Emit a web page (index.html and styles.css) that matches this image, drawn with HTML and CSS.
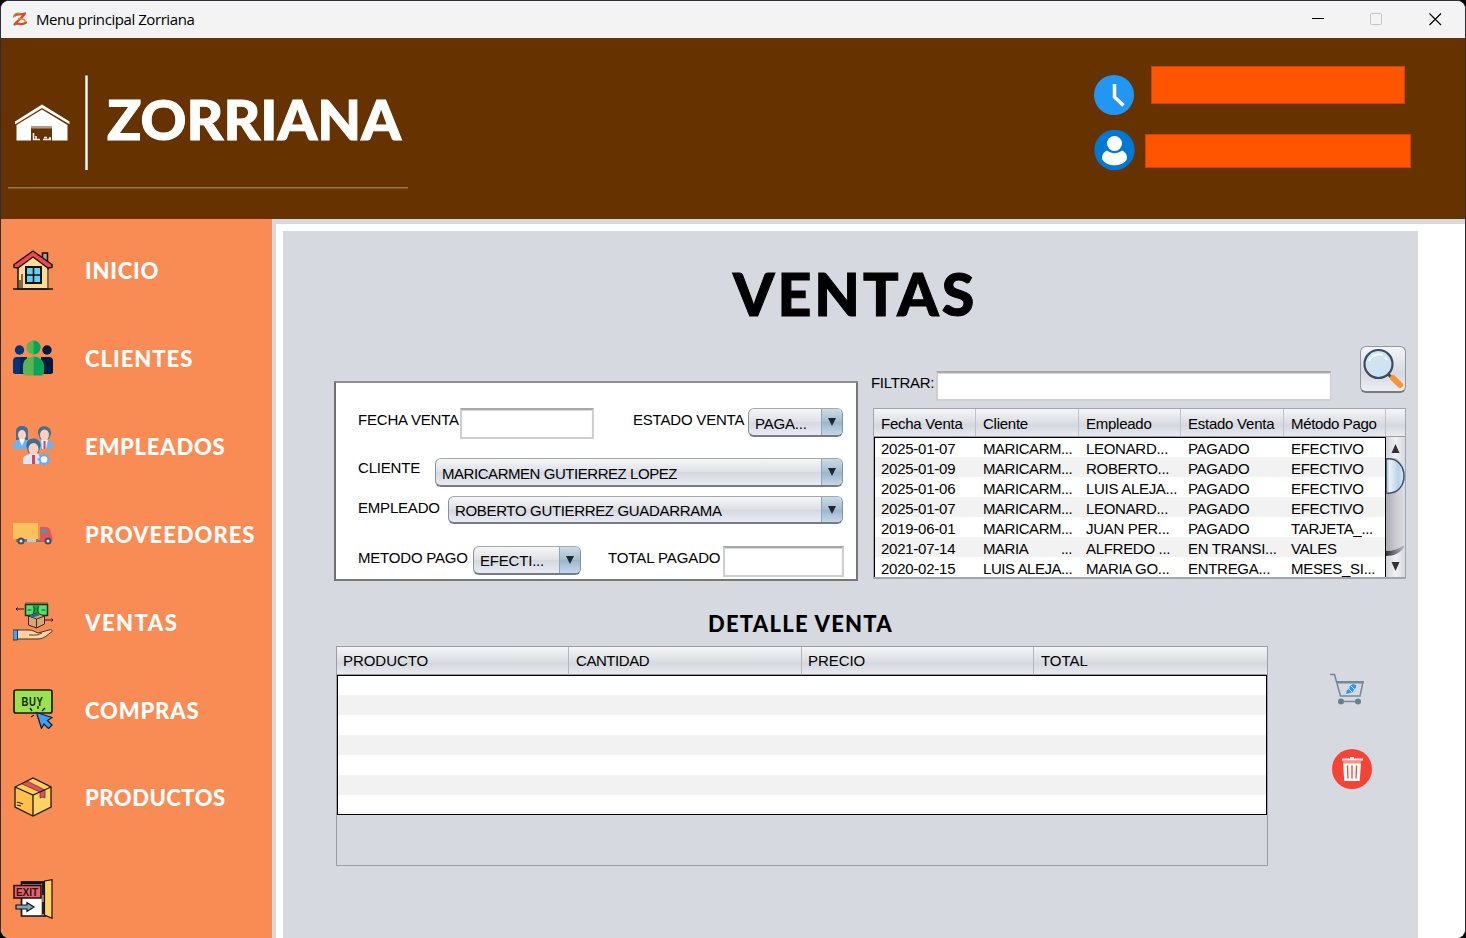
FILE: index.html
```html
<!DOCTYPE html>
<html lang="es">
<head>
<meta charset="utf-8">
<title>Menu principal Zorriana</title>
<link rel="stylesheet" href="styles.css">
</head>
<body>
<div class="window">
  <div class="titlebar">
    <svg class="app-icon" width="18" height="18" viewBox="0 0 18 18"><path fill="#eef9f8" d="M0 0h18v18H0z"/><path d="M4 5.500C6 3 9 5.500 14 3.500 12 7.500 7 9.500 3.500 14.500 7 11.500 10 16.500 15 12.500" fill="none" stroke="#e44a20" stroke-width="2.300" stroke-linecap="round" stroke-linejoin="round"/><path d="M2.500 7C3 3.500 6 2.500 9 3.500M7.500 9c3-.5 6 0 6.500 2" fill="none" stroke="#f07a2c" stroke-width="1.400" stroke-linecap="round"/></svg>
    <span class="window-title">Menu principal Zorriana</span>
    <svg class="window-controls" width="130" height="16" viewBox="0 0 130 16"><path d="M0 7.500h12" stroke="#000"/><rect x="58.500" y="2.500" width="11" height="11" rx="1" fill="none" stroke="#c3c3c3"/><path d="M117.500 2.500l11.500 11.500M129 2.500L117.500 14" stroke="#000" stroke-width="1.200"/></svg>
  </div>

  <header class="header">
    <svg class="brand" width="400" height="116" viewBox="0 0 400 116">
      <path fill="#fff" d="M7 49.500L34 32.500 61.500 49.500v2.700L34 36 7 52.500z"/>
      <path fill="#fff" d="M8.500 53L34 37.500 59.500 53v15.500H44V54H23v14.500H8.500z"/>
      <path fill="#b39b80" d="M23 54h21v2.500H23z"/>
      <path d="M25 67.500h7M25.500 61v7M28 64v4M36 65.500h3M35 67.500h8M41 66h2" stroke="#fff" stroke-width="1.500"/>
      <path fill="#fff" d="M77.300 3.500h2.400v94.500h-2.400z"/>
      <text class="brand-name" x="99" y="68" textLength="294" lengthAdjust="spacingAndGlyphs">ZORRIANA</text>
      <path fill="#947862" d="M0 115h400v1.500H0z"/>
    </svg>
    <div class="session">
      <div class="session-row">
        <svg width="41" height="41" viewBox="0 0 41 41"><circle cx="20" cy="20" r="20" fill="#2196f3"/><path d="M20.500 9v13l9 8.500" fill="none" stroke="#fff" stroke-width="3.500"/></svg>
        <span class="clock-value"></span>
      </div>
      <div class="session-row">
        <svg width="41" height="41" viewBox="0 0 41 41"><circle cx="20.500" cy="20" r="20.200" fill="#0078d4"/><circle cx="20.500" cy="13.500" r="7.500" fill="#fff"/><path d="M13 20.500c5 3.500 10 3.500 15 0 4 1.500 6 6 4.500 9.500-5 7-19 7-24 0-1.500-4 1-8 4.500-9.500z" fill="#fff"/></svg>
        <span class="user-value"></span>
      </div>
    </div>
  </header>

  <div class="body">
    <nav class="sidebar">
      <a class="nav-item nav-home">
        <svg width="40" height="40" viewBox="0 0 40 40"><path d="M5 16L20 5l15 11v23H5z" fill="#fddb98" stroke="#16100c" stroke-width="1.500"/><path d="M29.500 10V3h5v12" fill="#a8a2a0" stroke="#16100c" stroke-width="1.500"/><path d="M20 1L1 14.500v3l4 .5L20 7l15 11 4-.5v-3z" fill="#ef4652" stroke="#16100c" stroke-width="1.400"/><path d="M9 24v15M7 30v9M35 20v19" stroke="#876742" stroke-width="2"/><path d="M13 17h15v16H13z" fill="#68cdf5" stroke="#16100c" stroke-width="2"/><path d="M20.500 17v16M13 25h15M0 39h40" stroke="#16100c" stroke-width="1.600"/></svg>
        <span>INICIO</span>
      </a>
      <a class="nav-item">
        <svg width="40" height="40" viewBox="0 0 40 40"><circle cx="6.500" cy="12" r="4.700" fill="#01347d"/><circle cx="34" cy="12" r="4.700" fill="#01193f"/><path d="M0 35V23q0-4 4-4h10v17H2z" fill="#01347d"/><path d="M7 19h7v17H7z" fill="#02265c"/><path d="M28 19h8q4 0 4 4v12l-2 1H28z" fill="#01193f"/><circle cx="20.500" cy="9.500" r="7" fill="#57b653"/><path d="M20.500 2.500a7 7 0 010 14z" fill="#05a65b"/><path d="M10 35V28c0-6 5-9.500 10.500-9.500v19H12z" fill="#57b653"/><path d="M20.500 18.500C27 18.500 31 23 31 28v7l-2 2.500h-8.500z" fill="#05a65b"/></svg>
        <span>CLIENTES</span>
      </a>
      <a class="nav-item nav-employees">
        <svg width="40" height="40" viewBox="0 0 40 40"><path d="M3 14V5c0-7 12-7 12 0v9z" fill="#437091"/><ellipse cx="9" cy="9" rx="4" ry="5" fill="#ffd0be"/><path d="M0 23v-4c0-3 4-4 6-5h6c3 1 6 2 6 5v4z" fill="#66b6f7"/><path d="M6 13l3 7 3-7z" fill="#f4f7fc"/><path d="M25 7c-1-9 14-9 13 1l-2 5h-9z" fill="#437091"/><ellipse cx="31.500" cy="9" rx="4.500" ry="5.500" fill="#ffd0be"/><path d="M23 23v-4c0-3 3-4 6-5h5c3 1 6 2 6 5v4z" fill="#66b6f7"/><path d="M28 14h7l-2 9h-4z" fill="#e4edfb"/><path d="M30.500 15h2v8h-2z" fill="#df4256"/><path d="M13.500 21c-2-11 15-11 14-1l-2 7h-10z" fill="#3e6f92"/><ellipse cx="20.500" cy="23" rx="5" ry="6" fill="#ffd0be"/><path d="M10 38v-5c0-3 4-4 7-5h7c4 1 6 2 6 5v5z" fill="#dbe6fb"/><path d="M19 29h3v9h-3z" fill="#dc4259"/><path d="M31 27v13M24.500 33.500h13M26.500 29l9 9M35.500 29l-9 9" stroke="#60adf5" stroke-width="2.200"/><circle cx="31" cy="33.500" r="4.200" fill="#f4fbff" stroke="#60adf5" stroke-width="1.800"/></svg>
        <span>EMPLEADOS</span>
      </a>
      <a class="nav-item">
        <svg width="40" height="40" viewBox="0 0 40 40"><path d="M3 24h35v4H3z" fill="#8a7168"/><path d="M0 9h26v16H0z" fill="#fbc15a"/><path d="M25 9h1.500v17H25z" fill="#d9a055"/><path d="M27 13h7c3 1 4 4 4 7l1.500 3v4H27z" fill="#e55756"/><path d="M28.500 19v-4h4l2 4z" fill="#3b9cc8"/><path d="M14 25h9v3h-9z" fill="#c2c9d1"/><g fill="#dce4e9" stroke="#3e5263" stroke-width="2"><circle cx="8" cy="27" r="2.500"/><circle cx="35" cy="27" r="2.500"/></g></svg>
        <span>PROVEEDORES</span>
      </a>
      <a class="nav-item nav-sales">
        <svg width="40" height="40" viewBox="0 0 40 40"><path d="M3 7h8M4.500 5.500L3 7l1.500 1.500M32 18h8M38.500 16.500L40 18l-1.500 1.500" fill="none" stroke="#261812"/><path d="M12 0h23v3H12z" fill="#b6704d"/><path d="M12.500 2.500h22v11h-22z" fill="#55df73" stroke="#103616" stroke-width="1.500"/><path d="M20 3h6v10h-6z" fill="#17a638"/><path d="M14.500 8h4M28.500 8h4M20 4l2 3-2 5M26 4l-2 3 2 5" fill="none" stroke="#14562a"/><path d="M15.500 14l8-3 8 3v8l-8 4-8-3z" fill="#dca66f" stroke="#36291e"/><path d="M15.500 14l8 3v9M23.500 17l8-3" fill="none" stroke="#36291e"/><path d="M18 15l8-3" stroke="#2864ad" stroke-width="2.500"/><path d="M4 28h12c4 0 6 2 9 3l11-3c4-1 4 2 1 3-5 4-7 6-13 6H4z" fill="#ffd4a5" stroke="#433024"/><path d="M16 33h8l5-2" fill="none" stroke="#59402f"/><path d="M0 28h4.500v10H0z" fill="#3daaf5" stroke="#243748"/></svg>
        <span>VENTAS</span>
      </a>
      <a class="nav-item nav-purchases">
        <svg width="40" height="40" viewBox="0 0 40 40"><rect x="1" y="1" width="38" height="23" rx="2" fill="#9be34e" stroke="#102008" stroke-width="1.700"/><text class="buy-label" x="8.500" y="17" textLength="22" lengthAdjust="spacingAndGlyphs">BUY</text><path d="M19 22l-2-3M25 20v-3M29 22l3-3M21 26l-3 2" stroke="#14220b" stroke-width="1.400"/><path d="M23.500 23.500L39 28.500l-4.500 3 4.500 4.500-3.500 3.500-4.500-4.500-2.500 4.500z" fill="#3b9ff8" stroke="#14202b" stroke-width="1.300"/></svg>
        <span>COMPRAS</span>
      </a>
      <a class="nav-item nav-products">
        <svg width="40" height="40" viewBox="0 0 40 40"><path d="M2 10L20 1l18 9v20l-18 9-18-9z" fill="#ffcf5c"/><path d="M2 10l18 8v21L2 30z" fill="#ffc04b"/><path d="M20 18l18-8v20l-18 9z" fill="#ffd365"/><path d="M9 7l5-3 18 9v8l-2-1-3 1v-6z" fill="#df505d"/><path d="M2 10L20 1l18 9v20l-18 9-18-9zM2 10l18 8 18-8M20 18v21" fill="none" stroke="#201b15" stroke-width="1.300"/><path d="M9 7l18 8v6l3-1 2 1v-8L14 4" fill="none" stroke="#5b2a28" stroke-width=".7"/><path d="M4 25l6 2M4 28l4 1" stroke="#31291d" stroke-width="1.200"/></svg>
        <span>PRODUCTOS</span>
      </a>
      <a class="nav-exit" aria-label="Salir">
        <svg width="40" height="40" viewBox="0 0 40 40"><path d="M8.500 3h24v34h-24z" fill="#fff" stroke="#15110e" stroke-width="1.700"/><path d="M8 2.500h24v3H8z" fill="#15110e"/><path d="M28.500 4h3v32h-3z" fill="#9a7e57"/><path d="M31.500 2L39 .700v38.500L31.500 36z" fill="#ffd167" stroke="#15110e" stroke-width="1.200"/><path d="M30 4v12M30 23v12" stroke="#15110e" stroke-width="1.700"/><rect x="1" y="6.500" width="27" height="12.500" fill="#ef5d65" stroke="#15110e" stroke-width="1.500"/><text class="exit-label" x="3" y="16.500" textLength="22" lengthAdjust="spacingAndGlyphs">EXIT</text><path d="M3 26h11v-2.500l7 4.500-7 4.500V30H3z" fill="#7ca6be" stroke="#15110e" stroke-width="1.200"/></svg>
      </a>
    </nav>

    <main class="content">
      <section class="panel">
        <h1 class="page-title">VENTAS</h1>
        <div class="upper">
          <form class="sale-form">
            <div class="form-row row-date">
              <label class="label-date">FECHA VENTA</label><span class="field field-date"></span>
              <label class="label-status">ESTADO VENTA</label><span class="combo combo-status"><span>PAGA...</span><i></i></span>
            </div>
            <div class="form-row row-client">
              <label class="label-client">CLIENTE</label><span class="combo combo-client"><span>MARICARMEN GUTIERREZ LOPEZ</span><i></i></span>
            </div>
            <div class="form-row row-employee">
              <label class="label-employee">EMPLEADO</label><span class="combo combo-employee"><span>ROBERTO GUTIERREZ GUADARRAMA</span><i></i></span>
            </div>
            <div class="form-row row-payment">
              <label class="label-method">METODO PAGO</label><span class="combo combo-method"><span>EFECTI...</span><i></i></span>
              <label class="label-total">TOTAL PAGADO</label><span class="field field-total"></span>
            </div>
          </form>

          <div class="records">
            <div class="filter">
              <label>FILTRAR:</label><span class="field field-filter"></span>
              <button class="search" type="button" aria-label="Buscar"><svg width="44" height="44" viewBox="0 0 44 44"><path d="M27 27l5 5" stroke="#394e61" stroke-width="3"/><path d="M32 31l7 7" stroke="#ff9230" stroke-width="6" stroke-linecap="round"/><circle cx="17.500" cy="17" r="14" fill="#d0e3f3" stroke="#364d65" stroke-width="2.200"/><path d="M8 14c3-6 9-8 14-6M24 10l2 3" fill="none" stroke="#f5faff" stroke-width="2"/></svg></button>
            </div>
            <div class="sales-table">
              <div class="sales-head"><span>Fecha Venta</span><span>Cliente</span><span>Empleado</span><span>Estado Venta</span><span>Método Pago</span><span></span></div>
              <div class="sales-view">
                <div class="sales-rows">
                  <div class="sales-row"><span>2025-01-07</span><span>MARICARM...</span><span>LEONARD...</span><span>PAGADO</span><span>EFECTIVO</span></div>
                  <div class="sales-row"><span>2025-01-09</span><span>MARICARM...</span><span>ROBERTO...</span><span>PAGADO</span><span>EFECTIVO</span></div>
                  <div class="sales-row"><span>2025-01-06</span><span>MARICARM...</span><span>LUIS ALEJA...</span><span>PAGADO</span><span>EFECTIVO</span></div>
                  <div class="sales-row"><span>2025-01-07</span><span>MARICARM...</span><span>LEONARD...</span><span>PAGADO</span><span>EFECTIVO</span></div>
                  <div class="sales-row"><span>2019-06-01</span><span>MARICARM...</span><span>JUAN PER...</span><span>PAGADO</span><span>TARJETA_...</span></div>
                  <div class="sales-row"><span>2021-07-14</span><span>MARIA         ...</span><span>ALFREDO ...</span><span>EN TRANSI...</span><span>VALES</span></div>
                  <div class="sales-row"><span>2020-02-15</span><span>LUIS ALEJA...</span><span>MARIA GO...</span><span>ENTREGA...</span><span>MESES_SI...</span></div>
                </div>
                <svg class="scrollbar" width="19" height="140" viewBox="0 0 19 140">
                  <defs>
                    <linearGradient id="track"><stop offset="0" stop-color="#a9abb0"/><stop offset=".5" stop-color="#c9cbd0"/><stop offset="1" stop-color="#dcdee2"/></linearGradient>
                    <linearGradient id="thumb"><stop offset="0" stop-color="#90b0cb"/><stop offset=".2" stop-color="#e7f2fa"/><stop offset=".7" stop-color="#b9d2e6"/><stop offset="1" stop-color="#d8ebf8"/></linearGradient>
                    <linearGradient id="button"><stop offset="0" stop-color="#d2d4da"/><stop offset=".5" stop-color="#f0f1f3"/><stop offset="1" stop-color="#d6d9df"/></linearGradient>
                    <linearGradient id="cap"><stop offset="0" stop-color="#303236"/><stop offset="1" stop-color="#b9bbc1"/></linearGradient>
                  </defs>
                  <path fill="url(#track)" d="M0 0h19v140H0z"/>
                  <path fill="url(#cap)" d="M0 114c7 0 13-2 18-6v10l-8 4H0z"/>
                  <path fill="url(#button)" d="M0 0h19v30l-8-9H0zM0 119c8 0 15-3 19-10v31H0z"/>
                  <path d="M0 22c24-3 24 37 0 34z" fill="url(#thumb)" stroke="#3c5168" stroke-width="1.500"/>
                  <path d="M5.500 16l4-9 4 9zM5.500 125l4 9 4-9z" fill="#303238"/>
                </svg>
              </div>
            </div>
          </div>
        </div>

        <div class="lower">
          <div class="detail">
            <h2 class="detail-title">DETALLE VENTA</h2>
            <div class="detail-table">
              <div class="detail-head"><span>PRODUCTO</span><span class="tight">CANTIDAD</span><span>PRECIO</span><span>TOTAL</span></div>
              <div class="detail-rows"></div>
            </div>
          </div>
          <div class="actions">
            <svg width="40" height="40" viewBox="0 0 40 40"><path d="M0 2.500h4.500l6 21.500H30l3-14H7" fill="none" stroke="#71899a" stroke-width="1.500"/><path d="M6.500 9h27v2.500H7z" fill="#71899a"/><path d="M10 29.500h18" stroke="#71899a" stroke-width="1.500"/><circle cx="11" cy="29.500" r="3" fill="#67808e"/><circle cx="28" cy="29.500" r="3" fill="#67808e"/><path d="M16 22l1-4 2-1 1-3 3-2 3 1v3l-2 1-1 3-3 1z" fill="#2699fb"/><path d="M18 16l4 4M21 14l3 3" stroke="#d6d9e0"/></svg>
            <svg width="40" height="40" viewBox="0 0 40 40"><circle cx="20" cy="20" r="20" fill="#f54336"/><path d="M10 10.500h21M18 9h4" fill="none" stroke="#fff" stroke-width="2"/><path d="M11 12h18l-.4 3H11.400z" fill="#fb8f88"/><path d="M11 14.500h18l-1.300 17.500H12.300z" fill="#fff"/><path d="M15.500 16.500l.5 13M20 16.500v13M24.500 16.500l-.5 13" stroke="#f54336" stroke-width="1.300"/></svg>
          </div>
        </div>
      </section>
    </main>
  </div>
</div>
</body>
</html>
```
FILE: styles.css
```css
* { box-sizing: border-box; }
html { background: #08080b; }
body { margin: 0; width: 1466px; height: 938px; overflow: hidden; font: 15px/20px "Liberation Sans", Arial, sans-serif; color: #000; }
.window { width: 1466px; height: 938px; border: 1px solid #302c38; border-bottom: 0; border-radius: 9px; overflow: hidden; background: #fff; }
svg { display: block; flex: none; }
h1, h2 { margin: 0; }

.titlebar { height: 37px; background: #f3f3f3; display: flex; align-items: center; padding: 0 0 2px 10px; }
.window-title { margin-left: 7px; font: 15px/20px "Open Sans", "Noto Sans", sans-serif; letter-spacing: -0.43px; }
.window-controls { margin: 0 23px 0 auto; }

.header { height: 181px; background: #663200; display: flex; justify-content: space-between; padding-left: 7px; }
.brand { margin-top: 34px; overflow: visible; }
.brand-name { font: 900 55px "Lato", sans-serif; fill: #fff; stroke: #fff; stroke-width: 1px; }
.session { width: 371px; padding-top: 28px; }
.session-row { display: flex; align-items: flex-start; height: 68px; }
.session-row svg { margin-top: 9px; }
.session-row + .session-row svg { margin-top: -4px; }
.clock-value, .user-value { background: #ff5500; border: 1px solid #c84704; }
.clock-value { width: 254px; height: 38px; margin-left: 16px; }
.user-value { width: 266px; height: 34px; margin-left: 10px; }

.body { display: flex; height: 719px; background: #d6d9e0; }
.sidebar { width: 271px; background: #f98c55; padding: 8px 0 0 12px; }
.nav-item { display: flex; align-items: center; height: 88px; color: #fff; font: 900 22px/26px "Lato", sans-serif; letter-spacing: 1px; }
.nav-item svg { margin-top: -3px; }
.nav-item span { margin-left: 32px; }
.nav-home { letter-spacing: 0.8px; }
.nav-employees { letter-spacing: 0.75px; }
.nav-sales { letter-spacing: 1.5px; }
.nav-purchases { height: 87px; letter-spacing: 0.85px; }
.nav-products { letter-spacing: 0.5px; }
.nav-exit { display: block; margin-top: 37px; }
.buy-label { font: 700 13px "Liberation Sans", sans-serif; fill: #14220b; }
.exit-label { font: 700 10.5px "Liberation Sans", sans-serif; fill: #241416; }

.content { flex: 1; margin: 5px 0 0 4px; background: #fff; padding: 7px 0 0 7px; }
.panel { width: 1135px; height: 707px; background: #d6d9e0; }
.page-title { padding: 25px 0 0 450px; height: 115px; font: 900 59px/76px "Lato", sans-serif; letter-spacing: 3px; -webkit-text-stroke: 1px #000; }
.upper { display: flex; height: 259px; }

.sale-form { width: 524px; height: 200px; margin: 35px 0 0 51px; border: 2px solid #777; border-top-color: #8e9095; border-left-color: #707070; background: #fff; padding: 25px 0 0 22px; letter-spacing: -0.2px; }
.form-row { display: flex; align-items: flex-start; line-height: 24px; white-space: nowrap; }
.row-date { height: 50px; }
.row-client { height: 38px; line-height: 20px; }
.row-employee { height: 50px; }
.label-date { width: 102px; }
.label-status { width: 115px; margin-left: 39px; }
.label-client { width: 77px; }
.label-employee { width: 90px; }
.label-method { width: 115px; }
.label-total { width: 115px; margin-left: 27px; letter-spacing: -0.1px; }
.field { height: 31px; background: #fff; border: 2px solid #cdcfd1; border-top-color: #a5a7ab; box-shadow: inset 0 1px 1px #d8d8d8; }
.field-date { width: 134px; }
.field-total { width: 121px; }
.combo { display: flex; justify-content: space-between; height: 29px; border: 1px solid #8c9097; border-top-color: #a5a7ae; border-bottom: 2px solid #777b84; border-radius: 6px; overflow: hidden; background: linear-gradient(#f5f6f8, #dfe1e5 48%, #d5d8df 52%, #e8ebf4); line-height: 29px; }
.combo span { padding-left: 6px; }
.combo i { display: flex; justify-content: center; width: 21px; padding-top: 9px; border-left: 1px solid #8ca7bd; background: linear-gradient(#cbdbe8, #a4bdd2 50%, #9ab6cd 52%, #c1d9ec); }
.combo i::before { content: ""; width: 0; height: 8px; border: 4.5px solid transparent; border-top: 8px solid #22262b; border-bottom: 0; }
.combo-status { width: 95px; }
.combo-client { width: 408px; letter-spacing: -0.45px; }
.combo-employee { width: 395px; height: 28px; line-height: 27px; letter-spacing: -0.34px; }
.combo-method { width: 108px; line-height: 27px; }

.records { margin-left: 13px; }
.filter { display: flex; height: 62px; padding-top: 25px; letter-spacing: -0.3px; }
.filter label { width: 65px; padding-top: 2px; }
.field-filter { width: 395px; height: 30px; border-width: 2px 1px 2px 2px; }
.search { width: 46px; height: 47px; margin: -25px 0 0 29px; padding: 0; border: 1px solid #92969d; border-bottom: 2px solid #777b82; border-radius: 6px; background: linear-gradient(#f4f5f7, #d7d9df 60%, #eceef5); }
.sales-table { width: 533px; height: 171px; margin-left: 2px; border: 1px solid #a2a5b0; border-bottom-width: 2px; }
.sales-head, .sales-row { display: grid; grid-template-columns: 102px 103px 102px 103px 102px 19px; }
.sales-head, .detail-head { height: 28px; line-height: 28px; background: linear-gradient(#f4f5f7, #dfe1e4 45%, #d5d8de 60%, #e7eaf2); border-bottom: 1px solid #9a9da8; }
.sales-head { line-height: 30px; letter-spacing: -0.25px; }
.sales-head span { height: 27px; padding-left: 7px; border-right: 1px solid #bfc2cb; }
.sales-head span:nth-child(2), .sales-row span:nth-child(2) { margin-left: 0; }
.sales-head span:nth-child(5) { letter-spacing: -0.35px; }
.sales-head span:last-child { border-right: 0; }
.sales-view { display: flex; height: 140px; }
.sales-rows { width: 512px; border: 1px solid #000; border-bottom: 0; background: repeating-linear-gradient(#fff 0 20px, #f2f2f2 20px 40px) 0 -1px; letter-spacing: -0.45px; overflow: hidden; }
.sales-row { height: 20px; line-height: 22px; white-space: pre; }
.sales-row span { padding-left: 6px; }
.sales-row span:first-child { letter-spacing: -0.25px; }
.sales-row span:nth-child(n+3) { letter-spacing: -0.3px; }

.lower { display: flex; }
.detail { width: 932px; margin-left: 53px; }
.detail-title { height: 41px; padding: 6px 0 0 372px; font: 900 22px/26px "Lato", sans-serif; letter-spacing: 1.25px; }
.detail-table { height: 220px; border: 1px solid #9a9da6; }
.detail-head { display: grid; grid-template-columns: 232px 233px 232px 233px; letter-spacing: -0.05px; }
.detail-head span { padding-left: 6px; border-right: 1px solid #b4b7bf; }
.detail-head span:last-child { padding-left: 7px; border-right: 0; }
.detail-head .tight { padding-left: 7px; letter-spacing: -0.45px; }
.detail-rows { height: 140px; border: 1px solid #000; background: repeating-linear-gradient(#fff 0 20px, #f2f2f2 20px 40px) 0 -1px; background-size: 100% 200px; }
.actions { display: flex; flex-direction: column; gap: 37px; margin: 67px 0 0 64px; }
.actions svg:first-child { margin-left: -2px; }
```
